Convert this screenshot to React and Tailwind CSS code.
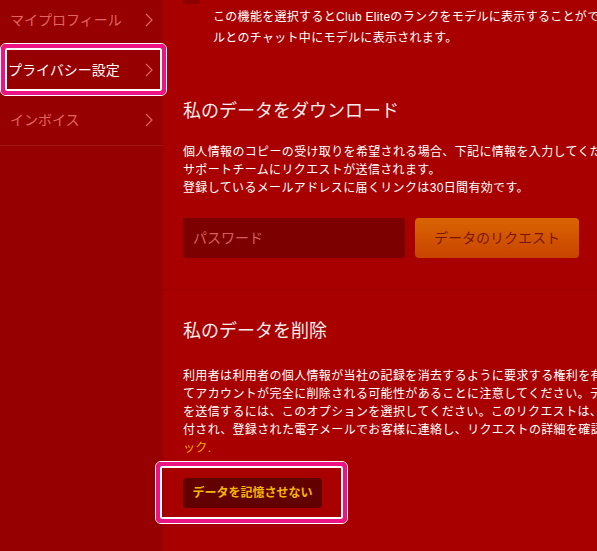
import React from "react";

const font = { fontFamily: '"Liberation Sans", "Noto Sans CJK JP", sans-serif' };

function Chevron({ className }) {
  return (
    <svg width="8" height="14" viewBox="0 0 8 14" className={className} fill="none">
      <polyline points="1,1 7,7 1,13" stroke="currentColor" strokeWidth="1.2" />
    </svg>
  );
}

// Pink-and-white focus frame drawn over a highlighted element
function Frame({ className }) {
  return (
    <div className={`pointer-events-none absolute rounded-[6px] border border-white ${className}`}>
      <div className="h-full rounded-[5px] border-[4px] border-[#ec1384]">
        <div className="h-full rounded-[2px] border-2 border-white" />
      </div>
    </div>
  );
}

function NavItem({ label, active }) {
  return (
    <div
      className={`relative flex h-[50px] items-center justify-between pr-[10px] text-[14px] ${
        active ? "pl-[8px] text-white" : "pl-[10px] text-[#e26464]"
      }`}
    >
      <span>{label}</span>
      <Chevron className="text-[#e26464]" />
      {active && <Frame className="-top-[2px] -bottom-[1px] left-0 -right-[4px]" />}
    </div>
  );
}

export default function App() {
  return (
    <div style={font} className="flex h-[551px] w-[597px] overflow-hidden bg-[#a80000] text-white">
      <aside className="flex w-[163px] shrink-0 flex-col bg-[#970000]">
        <div className="-mt-[5px]">
          <NavItem label="マイプロフィール" />
          <NavItem label="プライバシー設定" active />
          <div className="border-b border-[#a31414]">
            <NavItem label="インボイス" />
          </div>
        </div>
      </aside>

      <main className="min-w-0 flex-1">
        <div className="w-[660px]">
          {/* Club Elite visibility option */}
          <section className="pl-[20px]">
            <div className="-mt-[13px] h-[17px] w-[17px] rounded-[3px] bg-[#8c0000]" />
            <p className="mt-[3px] whitespace-nowrap pl-[30px] text-[12px] leading-[21px] tracking-[0.3px]">
              この機能を選択するとClub Eliteのランクをモデルに表示することができます。ランクはモデ
              <br />
              ルとのチャット中にモデルに表示されます。
            </p>
          </section>

          {/* Download my data */}
          <section className="border-b border-[#9c0000] pb-[31px] pl-[20px] pt-[49px]">
            <h2 className="text-[18px] leading-[27px] text-[#f6ecec]">私のデータをダウンロード</h2>
            <p className="mt-[18px] whitespace-nowrap text-[12px] leading-[18px] tracking-[0.35px]">
              個人情報のコピーの受け取りを希望される場合、下記に情報を入力してください。
              <br />
              サポートチームにリクエストが送信されます。
              <br />
              登録しているメールアドレスに届くリンクは30日間有効です。
            </p>
            <div className="mt-[21px] flex gap-[10px]">
              <input
                type="password"
                placeholder="パスワード"
                className="h-[40px] w-[222px] rounded-[3px] bg-[#7c0000] px-[10px] text-[14px] text-white outline-none placeholder:text-[#d4605e]"
              />
              <button className="h-[40px] w-[164px] rounded-[4px] bg-gradient-to-b from-[#da6400] to-[#c84400] text-[14px] text-[#7a1504]">
                データのリクエスト
              </button>
            </div>
          </section>

          {/* Delete my data */}
          <section className="pl-[20px] pt-[28px]">
            <h2 className="text-[18px] leading-[27px] text-[#f6ecec]">私のデータを削除</h2>
            <p className="mt-[22px] whitespace-nowrap text-[12px] leading-[18px] tracking-[0.35px]">
              利用者は利用者の個人情報が当社の記録を消去するように要求する権利を有しています。この操作によっ
              <br />
              てアカウントが完全に削除される可能性があることに注意してください。データ削除のリクエスト
              <br />
              を送信するには、このオプションを選択してください。このリクエストは、サポートチームに送
              <br />
              付され、登録された電子メールでお客様に連絡し、リクエストの詳細を確認します。詳細はこちらをクリ
              <br />
              <a className="text-[#f2a800]">ック.</a>
            </p>
            <div className="relative mt-[21px] inline-block">
              <button className="h-[30px] w-[139px] rounded-[4px] bg-[#620000] text-[12px] font-bold text-[#f5b800]">
                データを記憶させない
              </button>
              <Frame className="-left-[28px] -right-[26px] -top-[17px] -bottom-[16px]" />
            </div>
          </section>
        </div>
      </main>
    </div>
  );
}
